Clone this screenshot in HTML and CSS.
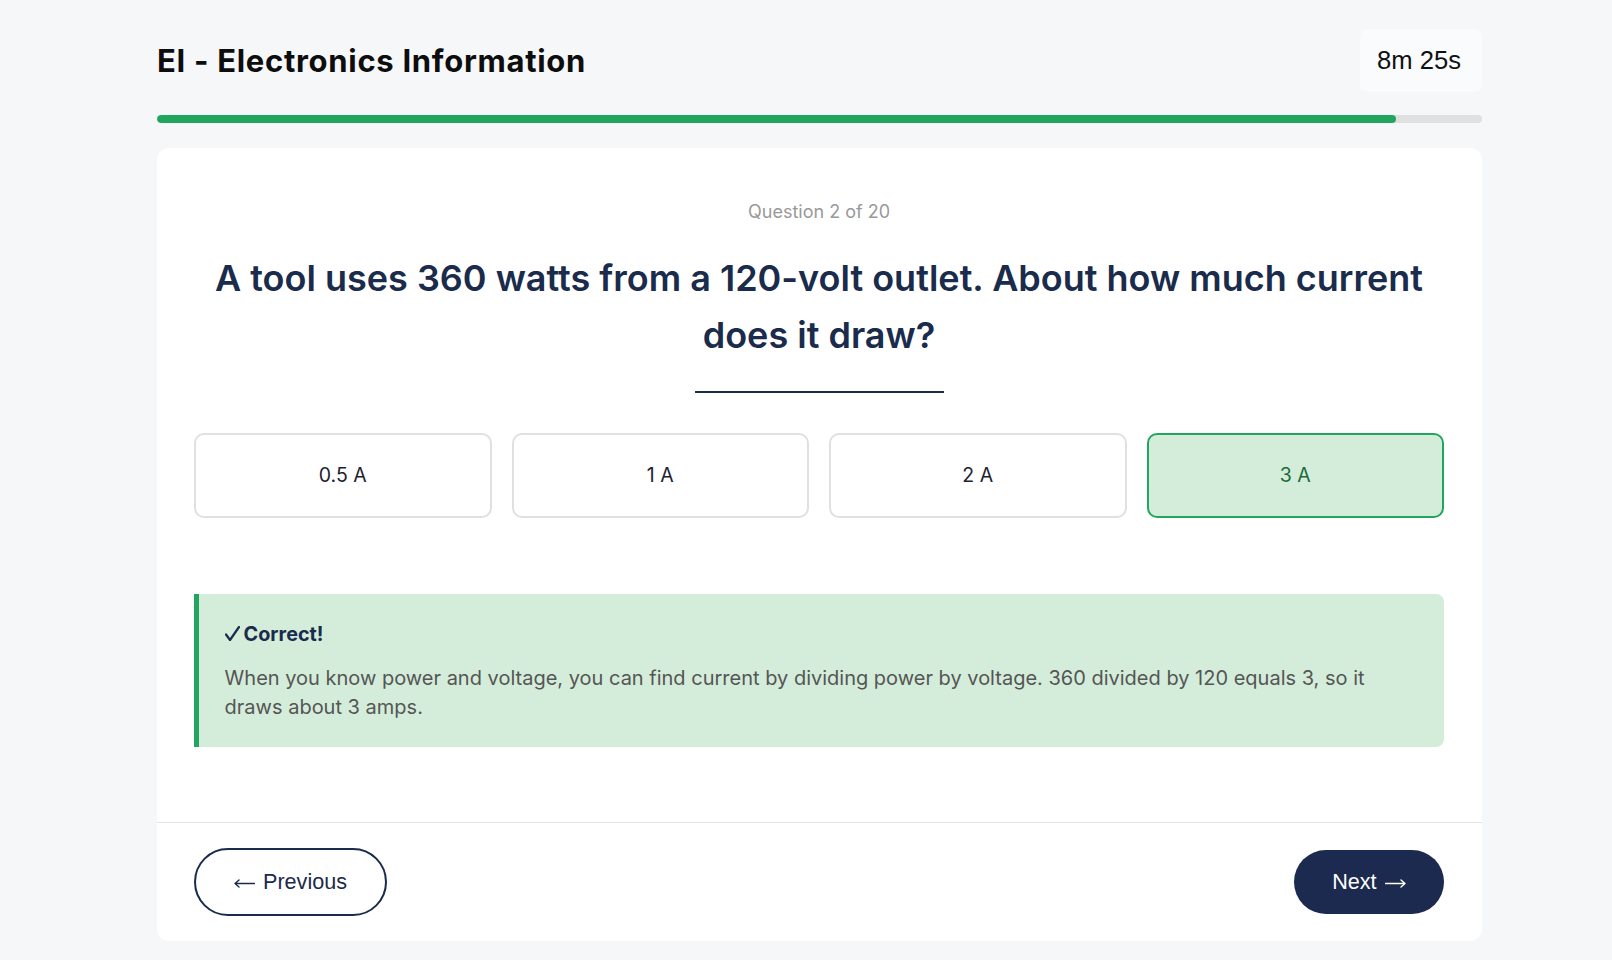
FILE: index.html
```html
<!DOCTYPE html>
<html lang="en">
<head>
<meta charset="utf-8">
<title>EI - Electronics Information</title>
<link rel="stylesheet" href="styles.css">
</head>
<body>
<div class="page">
  <header class="header">
    <h1 class="title">EI - Electronics Information</h1>
    <div class="timer">8m 25s</div>
  </header>
  <div class="progress"><div class="progress-fill" style="width:93.5%"></div></div>
  <main class="card">
    <section class="card-body">
      <p class="label">Question 2 of 20</p>
      <h2 class="question">A tool uses 360 watts from a 120-volt outlet. About how much current does it draw?</h2>
      <div class="underline"></div>
      <div class="options">
        <button class="option">0.5 A</button>
        <button class="option">1 A</button>
        <button class="option">2 A</button>
        <button class="option option-correct">3 A</button>
      </div>
      <div class="feedback">
        <div class="fb-title"><svg class="check" width="15" height="15" viewBox="0 0 15 15" aria-hidden="true"><polyline points="1,8.5 5,14 14,1" fill="none" stroke="#1a2b4c" stroke-width="2.2" stroke-linecap="round" stroke-linejoin="round"/></svg>Correct!</div>
        <div class="fb-text">When you know power and voltage, you can find current by dividing power by voltage. 360 divided by 120 equals 3, so it draws about 3 amps.</div>
      </div>
    </section>
    <footer class="card-footer">
      <button class="btn btn-prev"><svg class="arrow" width="21" height="9" viewBox="0 0 21 9" aria-hidden="true"><path d="M20.5 4.5H1M5 1L1 4.5L5 8" fill="none" stroke="currentColor" stroke-width="1.4" stroke-linecap="round" stroke-linejoin="round"/></svg><span>Previous</span></button>
      <button class="btn btn-next"><span>Next</span><svg class="arrow" width="21" height="9" viewBox="0 0 21 9" aria-hidden="true"><path d="M0.5 4.5H20M16 1L20 4.5L16 8" fill="none" stroke="currentColor" stroke-width="1.4" stroke-linecap="round" stroke-linejoin="round"/></svg></button>
    </footer>
  </main>
</div>
</body>
</html>
```
FILE: styles.css
```css
* { box-sizing: border-box; }
html, body { margin: 0; padding: 0; }
body {
  background: #f6f7f9;
  font-family: Inter, "Noto Sans", sans-serif;
  color: #222;
}
.page {
  padding: 29px 130px 19px 157px;
}
.header {
  display: flex;
  justify-content: space-between;
  align-items: center;
  height: 63px;
  margin-bottom: 23px;
}
.title {
  margin: 0;
  font-family: Inter, "DejaVu Sans", sans-serif;
  font-weight: 700;
  font-size: 31px;
  letter-spacing: 0.7px;
  line-height: 1.2;
  color: #0d0d0d;
}
.timer {
  height: 63px;
  display: flex;
  align-items: center;
  padding: 0 21px 0 17px;
  background: #fafbfc;
  border-radius: 8px;
  font-family: "Liberation Sans", Arial, sans-serif;
  font-size: 25.6px;
  color: #111;
}
.progress {
  height: 8px;
  background: #e0e0e0;
  border-radius: 4px;
  margin-bottom: 25px;
  overflow: hidden;
}
.progress-fill {
  height: 100%;
  background: #22a65f;
  border-radius: 4px;
}
.card {
  background: #fff;
  border-radius: 12px;
}
.card-body {
  padding: 50px 38px 75px 37px;
}
.label {
  margin: 0 0 23px;
  text-align: center;
  font-size: 18px;
  line-height: 28.8px;
  color: #999;
}
.question {
  margin: 0;
  text-align: center;
  font-weight: 600;
  font-size: 36px;
  line-height: 57px;
  color: #1a2b4c;
}
.underline {
  width: 249px;
  height: 2px;
  background: #1a2b4c;
  margin: 27px auto 40px;
}
.options {
  display: grid;
  grid-template-columns: repeat(4, 1fr);
  gap: 20px;
  margin-bottom: 76px;
}
.option {
  border: 2px solid #e0e0e0;
  border-radius: 10px;
  background: #fff;
  padding: 26px 10px;
  font-family: Inter, sans-serif;
  font-size: 19.5px;
  line-height: 28.8px;
  color: #1e2230;
  text-align: center;
}
.option-correct {
  background: #d4edda;
  border-color: #22a65f;
  color: #1b6b3a;
}
.feedback {
  background: #d4edda;
  border-left: 5px solid #22a65f;
  border-radius: 0 8px 8px 0;
  padding: 25.6px 40px 25.6px 25.6px;
}
.fb-title {
  display: flex;
  align-items: center;
  gap: 4px;
  font-weight: 700;
  font-size: 19.8px;
  line-height: 30px;
  color: #1a2b4c;
  margin-bottom: 14.5px;
}
.check {
  display: block;
  margin-top: -2px;
}
.fb-text {
  font-size: 20px;
  line-height: 29px;
  color: #555;
}
.card-footer {
  border-top: 1px solid #e3e3e3;
  padding: 25px 38.4px 25px 37px;
  display: flex;
  justify-content: space-between;
  align-items: center;
}
.btn {
  display: inline-flex;
  align-items: center;
  gap: 8px;
  font-family: "Liberation Sans", Arial, sans-serif;
  font-size: 21.6px;
  line-height: normal;
  padding: 19px 38px;
  border-radius: 999px;
  cursor: pointer;
}
.arrow {
  display: block;
  margin-top: 3px;
}
.btn-prev {
  background: #fff;
  color: #1a2b4c;
  border: 2px solid #1a2b4c;
}
.btn-next {
  background: #1b2a4e;
  color: #fff;
  border: none;
}
```
